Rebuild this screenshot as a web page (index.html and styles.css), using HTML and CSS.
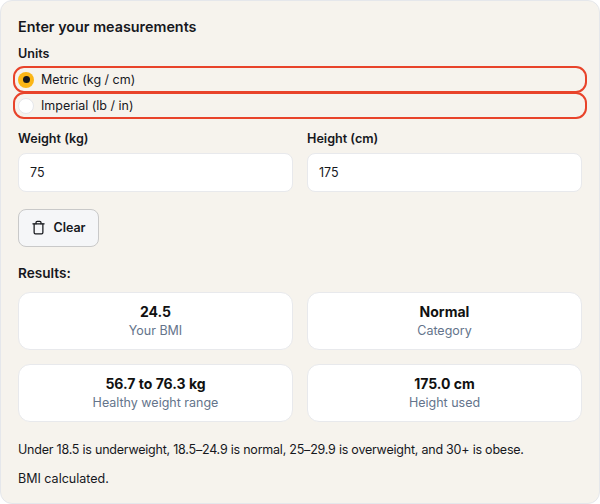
FILE: index.html
```html
<!DOCTYPE html>
<html lang="en">
<head>
<meta charset="utf-8">
<title>BMI calculator</title>
<link rel="stylesheet" href="styles.css">
</head>
<body>
<main class="card">
  <h2 class="title">Enter your measurements</h2>
  <div class="label units-label">Units</div>
  <div class="radios">
    <label class="radio-row"><span class="radio checked"></span><span>Metric (kg / cm)</span></label>
    <label class="radio-row"><span class="radio"></span><span>Imperial (lb / in)</span></label>
  </div>
  <div class="grid fields">
    <div class="field"><div class="label">Weight (kg)</div><div class="input">75</div></div>
    <div class="field"><div class="label">Height (cm)</div><div class="input">175</div></div>
  </div>
  <button class="btn" type="button">
    <svg class="icon" viewBox="0 0 24 24" fill="none" stroke="currentColor" stroke-width="2" stroke-linecap="round" stroke-linejoin="round"><path d="M3 6h18"/><path d="M19 6v14a2 2 0 0 1-2 2H7a2 2 0 0 1-2-2V6"/><path d="M8 6V4a2 2 0 0 1 2-2h4a2 2 0 0 1 2 2v2"/></svg>
    <span>Clear</span>
  </button>
  <h3 class="results">Results:</h3>
  <div class="grid tiles">
    <div class="tile"><div class="value">24.5</div><div class="caption">Your BMI</div></div>
    <div class="tile"><div class="value">Normal</div><div class="caption">Category</div></div>
    <div class="tile"><div class="value">56.7 to 76.3 kg</div><div class="caption">Healthy weight range</div></div>
    <div class="tile"><div class="value">175.0 cm</div><div class="caption">Height used</div></div>
  </div>
  <p class="note">Under 18.5 is underweight, 18.5–24.9 is normal, 25–29.9 is overweight, and 30+ is obese.</p>
  <p class="status">BMI calculated.</p>
</main>
</body>
</html>
```
FILE: styles.css
```css
* { box-sizing: border-box; }
html, body { margin: 0; padding: 0; background: #fff; }
body { font-family: "Inter", "Liberation Sans", sans-serif; color: #16181d; width: 600px; height: 504px; overflow: hidden; }
.card { width: 600px; height: 504px; background: #f6f3ed; border: 1px solid #e5e7eb; border-radius: 12px; padding: 16px 17px 0; }
.title { margin: 0; font-size: 14.35px; line-height: 20px; font-weight: 600; }
.label { font-size: 12.6px; line-height: 18px; font-weight: 600; }
.units-label { margin-top: 8px; }
.radios { margin: 3px -5px 0; display: flex; flex-direction: column; }
.radio-row { height: 27px; margin-bottom: -1px; display: flex; align-items: center; gap: 7px; padding-left: 3px; border: 2.5px solid #e8432a; border-radius: 11px; font-size: 12.5px; }
.radio { width: 16px; height: 16px; border-radius: 50%; background: #fff; border: 1px solid #e5e7eb; display: flex; align-items: center; justify-content: center; }
.radio.checked { background: #fbb616; border: 0; }
.radio.checked::after { content: ""; width: 7px; height: 7px; border-radius: 50%; background: #16181d; }
.grid { display: grid; grid-template-columns: 275px 275px; column-gap: 14px; }
.fields { margin-top: 12px; }
.input { margin-top: 5px; height: 39px; background: #fff; border: 1px solid #e8e9ec; border-radius: 8px; padding-left: 11px; display: flex; align-items: center; font-size: 12.5px; }
.btn { margin-top: 16.5px; width: 81px; height: 38px; display: flex; align-items: center; justify-content: center; gap: 7px; padding: 0; background: #f5f6f8; border: 1px solid #c9c9c9; border-radius: 8px; font: 600 12.5px "Inter", "Liberation Sans", sans-serif; color: #16181d; }
.icon { width: 15px; height: 15px; }
.results { margin: 16px 0 0; font-size: 13.6px; line-height: 20px; font-weight: 600; }
.tiles { margin-top: 9px; row-gap: 14px; }
.tile { height: 58px; padding-top: 1px; background: #fff; border: 1px solid #e8e9ec; border-radius: 12px; display: flex; flex-direction: column; align-items: center; justify-content: center; }
.value { font-size: 14px; line-height: 20px; font-weight: 700; color: #111; }
.caption { font-size: 12.5px; line-height: 18px; color: #64748b; }
.note { margin: 19.5px 0 0; font-size: 12.5px; line-height: 18px; letter-spacing: -0.22px; }
.status { margin: 11px 0 0; font-size: 12.5px; line-height: 18px; }
```
